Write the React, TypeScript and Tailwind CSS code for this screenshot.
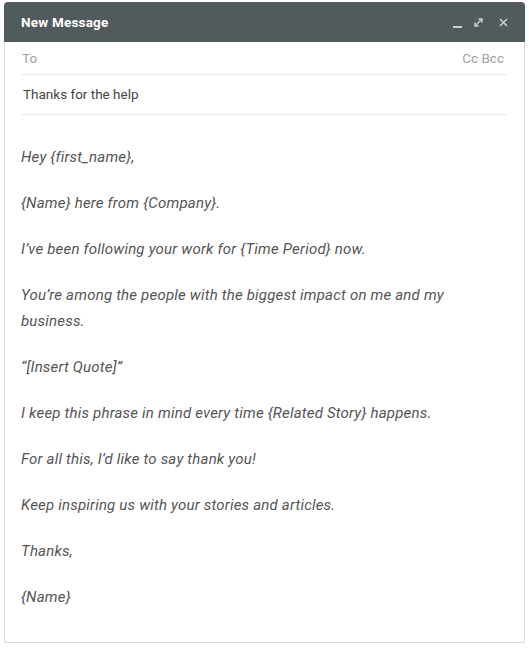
export default function App() {
  const body = [
    'Hey {first_name},',
    '{Name} here from {Company}.',
    'I\u2019ve been following your work for {Time Period} now.',
    'You\u2019re among the people with the biggest impact on me and my business.',
    '\u201c[Insert Quote]\u201d',
    'I keep this phrase in mind every time {Related Story} happens.',
    'For all this, I\u2019d like to say thank you!',
    'Keep inspiring us with your stories and articles.',
    'Thanks,',
    '{Name}',
  ]

  return (
    <div className="w-[529px] h-[648px] bg-white pt-[2px] pl-[4px] font-['Roboto',sans-serif]">
      <div className="w-[521px] h-[641px] border border-[#dcdcdc] border-t-0 rounded-t-[4px] flex flex-col">
        <div className="h-[40px] -mx-px bg-[#515a5c] rounded-t-[4px] flex items-center justify-between pl-[17px] pr-[16px]">
          <span className="text-white font-bold text-[13.5px] tracking-[0.2px]">New Message</span>
          <div className="flex items-center text-[#c8cccd]">
            <svg width="11" height="11" viewBox="0 0 11 11" className="mt-[2px]">
              <rect x="1" y="8" width="9" height="2" fill="currentColor" />
            </svg>
            <svg width="11" height="11" viewBox="0 0 11 11" fill="none" stroke="currentColor" strokeWidth="1.5" className="ml-[10px]">
              <path d="M2 9 L9 2" />
              <path d="M5.5 2 H9 V5.5" />
              <path d="M2 5.5 V9 H5.5" />
            </svg>
            <svg width="11" height="11" viewBox="0 0 11 11" fill="none" stroke="currentColor" strokeWidth="1.6" className="ml-[14px]">
              <path d="M2 2 L9 9 M9 2 L2 9" />
            </svg>
          </div>
        </div>
        <div className="px-[16px]">
          <div className="h-[33px] flex items-center justify-between border-b border-[#ececec] text-[13.5px] text-[#a0a0a0] pt-[1px]">
            <span className="pl-[1px]">To</span>
            <span className="pr-[4px]">Cc Bcc</span>
          </div>
          <div className="h-[40px] flex items-center border-b border-[#ececec] text-[13.5px] text-[#444] pl-[2px]">
            Thanks for the help
          </div>
        </div>
        <div className="pl-[16px] pt-[29px] pr-[60px] flex flex-col gap-[20px] italic text-[15px] tracking-[0.2px] leading-[26px] text-[#555]">
          {body.map((line, i) => (
            <p key={i}>{line}</p>
          ))}
        </div>
      </div>
    </div>
  )
}
